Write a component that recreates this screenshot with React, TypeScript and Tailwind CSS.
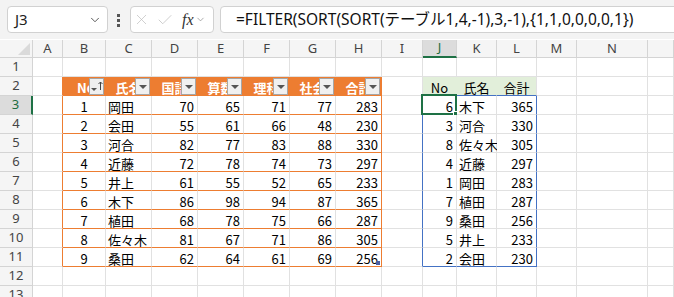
import { Check, ChevronDown, X } from "lucide-react";

const letters = ["A", "B", "C", "D", "E", "F", "G", "H", "I", "J", "K", "L", "M", "N", ""];
const heads = ["No", "氏名", "国語", "算数", "理科", "社会", "合計"];
const scores: (string | number)[][] = [
  [1, "岡田", 70, 65, 71, 77, 283],
  [2, "会田", 55, 61, 66, 48, 230],
  [3, "河合", 82, 77, 83, 88, 330],
  [4, "近藤", 72, 78, 74, 73, 297],
  [5, "井上", 61, 55, 52, 65, 233],
  [6, "木下", 86, 98, 94, 87, 365],
  [7, "植田", 68, 78, 75, 66, 287],
  [8, "佐々木", 81, 67, 71, 86, 305],
  [9, "桑田", 62, 64, 61, 69, 256],
];
const spill: (string | number)[][] = [
  [6, "木下", 365],
  [3, "河合", 330],
  [8, "佐々木", 305],
  [4, "近藤", 297],
  [1, "岡田", 283],
  [7, "植田", 287],
  [9, "桑田", 256],
  [5, "井上", 233],
  [2, "会田", 230],
];
const rows = [1, 2, 3, 4, 5, 6, 7, 8, 9, 10, 11, 12, 13];

function FilterButton({ sort }: { sort?: boolean }) {
  return (
    <div className="absolute right-[1px] top-[1px] w-[15px] h-[17px] bg-[#f0f0f0] border border-[#a6a6a6] flex items-center justify-center">
      {sort ? (
        <div className="flex items-center gap-[1px] pl-[1px]">
          <span className="block w-0 h-0 mt-[5px] border-l-[3px] border-r-[3px] border-t-[3px] border-l-transparent border-r-transparent border-t-[#555]" />
          <svg width="5" height="10" viewBox="0 0 5 10" className="mb-[2px]">
            <path d="M2.5 1 V9 M0.5 3 L2.5 1 L4.5 3" stroke="#444" strokeWidth="1" fill="none" />
          </svg>
        </div>
      ) : (
        <span className="block w-0 h-0 border-l-[4px] border-r-[4px] border-t-[4px] border-l-transparent border-r-transparent border-t-[#555]" />
      )}
    </div>
  );
}

function Cell({ r, c }: { r: number; c: number }) {
  const inTable = c >= 1 && c <= 7 && r >= 3 && r <= 11;
  const isHead = c >= 1 && c <= 7 && r === 2;
  const inSpill = c >= 9 && c <= 11 && r >= 3 && r <= 11;
  const spillHead = c >= 9 && c <= 11 && r === 2;

  let right = "border-r-[#e1e1e1]";
  let bottom = "border-b-[#e1e1e1]";
  let bg = "bg-white";
  if (isHead) {
    right = "border-r-[#ed7d31]";
    bottom = "border-b-[#ed7d31]";
    bg = "bg-[#ed7d31]";
  }
  if (inTable) {
    bottom = "border-b-[#ed7d31]";
    if (c === 7) right = "border-r-[#ed7d31]";
  }
  if (c === 0 && r >= 2 && r <= 11) right = "border-r-[#ed7d31]";
  if (spillHead) {
    bg = "bg-[#e2efda]";
    bottom = "border-b-[#4472c4]";
    if (c < 11) right = "border-r-[#e2efda]";
  }
  if (inSpill) {
    if (c === 11) right = "border-r-[#4472c4]";
    if (r === 11) bottom = "border-b-[#4472c4]";
  }
  if (c === 8 && r >= 3 && r <= 11) right = "border-r-[#4472c4]";

  let text: string | number = "";
  let align = "justify-end pr-[3px]";
  let tone = "text-black";
  if (isHead) {
    text = heads[c - 1];
    align = c === 1 ? "justify-center pl-[4px]" : "justify-center";
    tone = "text-white font-bold";
  } else if (inTable) {
    text = scores[r - 3][c - 1];
    if (c === 1) align = "justify-center";
    if (c === 2) align = "justify-start pl-[2px]";
  } else if (spillHead) {
    text = ["No", "氏名", "合計"][c - 9];
    align = "justify-center";
  } else if (inSpill) {
    text = spill[r - 3][c - 9];
    if (c === 10) align = "justify-start pl-[2px]";
  }

  return (
    <div
      className={`relative h-[19px] border-r border-b ${right} ${bottom} ${bg} ${align} ${tone} flex items-center overflow-visible whitespace-nowrap text-[13px] leading-none`}
    >
      <span className="pt-[2px]">{text}</span>
      {isHead && <FilterButton sort={c === 1} />}
      {c === 7 && r === 11 && (
        <span className="absolute right-[1px] bottom-[1px] w-[4px] h-[4px] bg-[#4a5fa3]" />
      )}
      {c === 9 && r === 3 && (
        <>
          <span className="absolute -left-[2px] -top-[2px] w-[36px] h-[21px] border-2 border-[#1e7145]" />
          <span className="absolute -right-[3px] -bottom-[3px] w-[6px] h-[6px] bg-[#1e7145] border border-white" />
        </>
      )}
    </div>
  );
}

export default function App() {
  return (
    <div
      className="w-[674px] h-[297px] overflow-hidden bg-white"
      style={{ fontFamily: '"Noto Sans CJK JP", "Noto Sans", sans-serif' }}
    >
      <div className="h-[40px] bg-[#f3f3f3] flex items-start pt-[6px] pl-[7px] border-b border-white">
        <div className="w-[101px] h-[27px] shrink-0 bg-white border border-[#d1d1d1] rounded-[4px] flex items-center justify-between pl-[7px] pr-[5px]">
          <span className="text-[15px] text-[#222]" style={{ fontFamily: '"Noto Sans", sans-serif' }}>
            J3
          </span>
          <ChevronDown size={14} strokeWidth={1.5} className="text-[#444]" />
        </div>
        <div className="w-[3px] ml-[9px] mt-[8px] flex flex-col gap-[2px] shrink-0">
          <span className="block w-[3px] h-[3px] bg-[#555]" />
          <span className="block w-[3px] h-[3px] bg-[#555]" />
          <span className="block w-[3px] h-[3px] bg-[#555]" />
        </div>
        <div className="w-[84px] h-[27px] ml-[10px] shrink-0 bg-white border border-[#d1d1d1] rounded-[4px] flex items-center pl-[2px] gap-[6px]">
          <X size={17} strokeWidth={1} className="text-[#bdbdbd]" />
          <Check size={18} strokeWidth={1} className="text-[#bdbdbd]" />
          <span
            className="text-[16px] italic text-[#333] ml-[2px]"
            style={{ fontFamily: '"Liberation Serif", "DejaVu Serif", serif' }}
          >
            fx
          </span>
          <ChevronDown size={11} strokeWidth={1.5} className="text-[#888] -ml-[5px]" />
        </div>
        <div className="w-[470px] h-[27px] ml-[6px] shrink-0 bg-white border border-[#d1d1d1] rounded-[4px] flex items-center pl-[15px]">
          <span
            className="text-[15.5px] text-[#111] whitespace-nowrap"
            style={{ fontFamily: '"Noto Sans", "Noto Sans CJK JP", sans-serif' }}
          >
            =FILTER(SORT(SORT(テーブル1,4,-1),3,-1),{"{"}1,1,0,0,0,0,1{"}"})
          </span>
        </div>
      </div>

      <div className="grid grid-cols-[33px_30px_43px_46px_46px_46px_46px_46px_46px_41px_34px_40px_40px_40px_71px_1fr]">
        <div className="relative h-[18px] bg-[#f5f5f5] border-r border-b border-[#d4d4d4]">
          <svg width="12" height="12" className="absolute right-[2px] bottom-[2px]">
            <polygon points="12,0 12,12 0,12" fill="#dadada" />
          </svg>
        </div>
        {letters.map((l, i) =>
          i === 9 ? (
            <div
              key={l + i}
              className="h-[18px] bg-[#dcdcdc] border-r border-[#d4d4d4] border-b-2 border-b-[#1e7145] flex items-center justify-center text-[13px] text-[#1e6c41]"
              style={{ fontFamily: '"Noto Sans", sans-serif' }}
            >
              {l}
            </div>
          ) : (
            <div
              key={l + i}
              className="h-[18px] bg-[#f5f5f5] border-r border-b border-[#d4d4d4] flex items-center justify-center text-[13px] text-[#444]"
              style={{ fontFamily: '"Noto Sans", sans-serif' }}
            >
              {l}
            </div>
          )
        )}
        {rows.map((r) => (
          <RowLine key={r} r={r} />
        ))}
      </div>
    </div>
  );
}

function RowLine({ r }: { r: number }) {
  return (
    <>
      {r === 3 ? (
        <div
          className="h-[19px] bg-[#dcdcdc] border-r-2 border-r-[#1e7145] border-b border-b-[#d4d4d4] flex items-center justify-center text-[13px] text-[#1e6c41]"
          style={{ fontFamily: '"Noto Sans", sans-serif' }}
        >
          {r}
        </div>
      ) : (
        <div
          className="h-[19px] bg-[#f5f5f5] border-r border-b border-[#d4d4d4] flex items-center justify-center text-[13px] text-[#444]"
          style={{ fontFamily: '"Noto Sans", sans-serif' }}
        >
          {r}
        </div>
      )}
      {letters.map((_, c) => (
        <Cell key={c} r={r} c={c} />
      ))}
    </>
  );
}
